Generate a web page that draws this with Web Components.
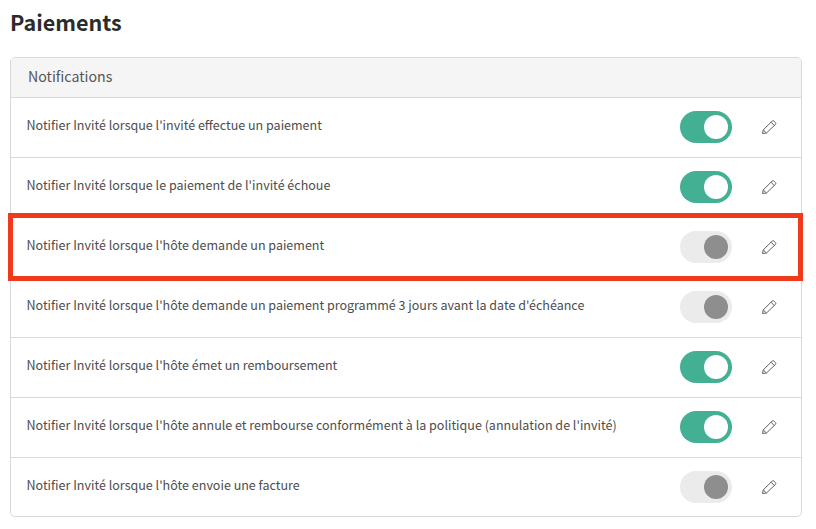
<!DOCTYPE html>
<html lang="fr">
<head>
<meta charset="utf-8">
<title>Paiements</title>
<style>
  html, body { margin: 0; background: #fff; }
  body { font-family: "Noto Sans CJK JP", "Noto Sans", sans-serif; color: #4a4a4a; }
</style>
</head>
<body>
<settings-page heading="Paiements">
  <notif-card heading="Notifications">
    <notif-row on>Notifier Invité lorsque l'invité effectue un paiement</notif-row>
    <notif-row on>Notifier Invité lorsque le paiement de l'invité échoue</notif-row>
    <notif-row highlight>Notifier Invité lorsque l'hôte demande un paiement</notif-row>
    <notif-row>Notifier Invité lorsque l'hôte demande un paiement programmé 3 jours avant la date d'échéance</notif-row>
    <notif-row on>Notifier Invité lorsque l'hôte émet un remboursement</notif-row>
    <notif-row on>Notifier Invité lorsque l'hôte annule et rembourse conformément à la politique (annulation de l'invité)</notif-row>
    <notif-row>Notifier Invité lorsque l'hôte envoie une facture</notif-row>
  </notif-card>
</settings-page>
<script>
class SettingsPage extends HTMLElement {
  constructor() {
    super();
    this.attachShadow({mode: 'open'}).innerHTML = `
      <style>
        :host { display: block; padding: 8px 14px 0 10px; }
        h1 { margin: 0 0 22px; font-size: 21.5px; line-height: 27px; font-weight: 700; color: #2b2b2b; }
      </style>
      <h1>${this.getAttribute('heading')}</h1>
      <slot></slot>`;
  }
}

class NotifCard extends HTMLElement {
  constructor() {
    super();
    this.attachShadow({mode: 'open'}).innerHTML = `
      <style>
        :host { display: block; border: 1px solid #d9d9d9; border-radius: 5px; }
        header { height: 36px; padding: 0 17px 3px; display: flex; align-items: center;
          background: #f5f5f5; border-radius: 4px 4px 0 0; border-bottom: 1px solid #d9d9d9;
          font-size: 14.2px; line-height: 20px; color: #555; }
      </style>
      <header>${this.getAttribute('heading')}</header>
      <slot></slot>`;
  }
}

class NotifRow extends HTMLElement {
  constructor() {
    super();
    this.attachShadow({mode: 'open'}).innerHTML = `
      <style>
        :host { display: flex; align-items: center; height: 58px; padding: 0 24px 1px 16px;
          position: relative; border-bottom: 1px solid #d9d9d9; font-size: 12.53px; line-height: 18px; color: #4d4d4d; }
        :host(:last-child) { border-bottom: 0; padding-bottom: 0; }
        .label { flex: 1; margin-top: -5px; margin-left: -0.5px; }
        toggle-switch { margin-right: 29px; }
        .mark { position: absolute; left: -3px; right: -2px; top: -5px; bottom: -4px;
          border: 5px solid #f03a1c; pointer-events: none; }
      </style>
      <span class="label"><slot></slot></span>
      <toggle-switch ${this.hasAttribute('on') ? 'on' : ''}></toggle-switch>
      <edit-pencil></edit-pencil>
      ${this.hasAttribute('highlight') ? '<div class="mark"></div>' : ''}`;
  }
}

class ToggleSwitch extends HTMLElement {
  constructor() {
    super();
    this.attachShadow({mode: 'open'}).innerHTML = `
      <style>
        :host { width: 52px; height: 32px; border-radius: 16px; padding: 4px;
          box-sizing: border-box; display: flex; justify-content: flex-end; background: #ebebeb; }
        :host([on]) { background: #43b094; }
        i { width: 24px; height: 24px; border-radius: 50%; background: #8e8e8e; }
        :host([on]) i { background: #fff; }
      </style>
      <i></i>`;
  }
}

class EditPencil extends HTMLElement {
  constructor() {
    super();
    this.attachShadow({mode: 'open'}).innerHTML = `
      <style>
        :host { display: block; width: 16px; height: 16px; }
        svg { display: block; }
      </style>
      <svg width="16" height="16" viewBox="0 0 16 16" fill="none" stroke="#606060" stroke-width="1" stroke-linejoin="round">
        <path d="M1.5 14.5 2.2 11 11.2 2Q12 1.3 12.8 2L14.5 3.7Q15.2 4.5 14.5 5.3L5.5 14Z"/>
        <path d="M10 3.2 13.3 6.5M2.2 11 5.5 14"/>
      </svg>`;
  }
}

customElements.define('settings-page', SettingsPage);
customElements.define('notif-card', NotifCard);
customElements.define('notif-row', NotifRow);
customElements.define('toggle-switch', ToggleSwitch);
customElements.define('edit-pencil', EditPencil);
</script>
</body>
</html>
